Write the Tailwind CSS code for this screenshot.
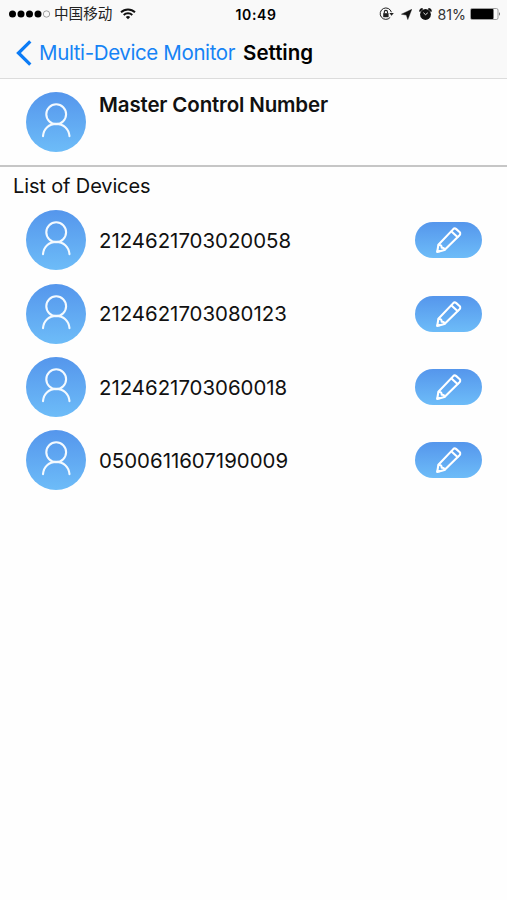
<!DOCTYPE html>
<html lang="en">

<head>
    <meta charset="UTF-8">
    <meta name="viewport" content="width=device-width, initial-scale=1.0">
    <title>Setting</title>
    <script src="https://cdn.jsdelivr.net/npm/@tailwindcss/browser@4"></script>
</head>

<body class="bg-[#fefefe] text-[#111] font-['Inter','Noto_Sans_CJK_SC',sans-serif] min-h-screen overflow-hidden">

    <!-- Shared icons -->
    <svg class="w-full h-0">
        <defs>
            <linearGradient id="blue" x1="0" y1="0" x2="0" y2="1">
                <stop offset="0" stop-color="#5596ec" />
                <stop offset="1" stop-color="#6dbcf8" />
            </linearGradient>
        </defs>
        <symbol id="user" viewBox="0 0 60 60">
            <g fill="none" stroke="#f4faff" stroke-width="2.1" stroke-linecap="round">
                <circle cx="30.2" cy="22.2" r="9.9" />
                <path d="M17 44.2C17.6 36.5 23 31.9 30.2 31.9S42.8 36.5 43.5 44.2" />
            </g>
        </symbol>
        <symbol id="pencil" viewBox="0 0 26 28">
            <g fill="none" stroke="#fff" stroke-width="2.1" stroke-linecap="round" stroke-linejoin="round">
                <path d="M1.7 25.4L2.9 18.3L17.8 2.6Q19.1 1.3 20.5 2.4L24.3 5.8Q25.4 7 24.3 8.4L9 23.4Z" />
                <path d="M16 4.9L22 10.6M3.2 18.5Q6.3 18 6.2 21.2Q8.8 21 9 23.4M1.9 24.8L4 24.6" />
            </g>
        </symbol>
    </svg>

    <header class="h-[79px] bg-[#f9f9f9] border-b border-[#dcdcdc]">
        <!-- Status bar -->
        <div class="h-[27px] grid grid-cols-[1fr_auto_1fr] items-center text-black">
            <div class="flex items-center pl-2">
                <svg class="w-[43px] h-2.5 shrink-0" viewBox="0 0 43 10">
                    <circle cx="4.5" cy="5" r="3.5" />
                    <circle cx="13" cy="5" r="3.5" />
                    <circle cx="21.5" cy="5" r="3.5" />
                    <circle cx="30" cy="5" r="3.5" />
                    <circle cx="38.5" cy="5" r="3.2" fill="none" stroke="#888" stroke-width=".8" />
                </svg>
                <span class="ml-[3px] pt-px text-[14.6px] leading-[27px] text-[#222] whitespace-nowrap">中国移动</span>
                <svg class="ml-2 w-4 h-3 shrink-0" viewBox="0 0 16 12" fill="none" stroke="#111" stroke-width="1.9">
                    <path d="M1 4.3A10 10 0 0 1 15 4.3M3.7 7A6.2 6.2 0 0 1 12.3 7" />
                    <path d="M8 11.2L5.8 9A3.2 3.2 0 0 1 10.2 9Z" fill="#111" stroke="none" />
                </svg>
            </div>
            <span class="pl-[5px] text-[14px] leading-[27px] font-semibold tracking-[.6px]">10:49</span>
            <div class="flex items-center justify-end pr-1.5">
                <svg class="w-[15px] h-[14px]" viewBox="0 0 15 14" fill="none" stroke="#222">
                    <path d="M11.2 10.4A5.7 5.7 0 1 1 12.4 5.2" stroke-width="1" />
                    <path d="M10.3 6H14.8L12.6 8.8Z" fill="#222" stroke="none" />
                    <rect x="4.2" y="6.2" width="5.4" height="4" fill="#222" stroke="none" />
                    <path d="M5.3 6.4V5A1.6 1.6 0 0 1 8.5 5V6.4" stroke-width="1.1" />
                </svg>
                <svg class="ml-[7px] w-[11px] h-[11px]" viewBox="0 0 11 11">
                    <path d="M10.8.3L6.8 10.6L5.3 6.1L.4 5.2Z" fill="#111" stroke="#111" stroke-width=".4" />
                </svg>
                <svg class="ml-[7px] w-[13px] h-3" viewBox="0 0 13 12">
                    <circle cx="6.5" cy="6.5" r="5.4" fill="#111" />
                    <path d="M1.3 3.6Q1.1 1.3 3.7 1.1M11.7 3.6Q11.9 1.3 9.3 1.1" fill="none" stroke="#111" stroke-width="2.2" />
                    <path d="M4.4 4.7L6.5 6.7L8.8 4.8" fill="none" stroke="#f9f9f9" stroke-width=".9" />
                </svg>
                <span class="ml-[6px] text-[14.2px] leading-[27px] text-[#333]">81%</span>
                <svg class="ml-1 w-[31px] h-3" viewBox="0 0 31 12">
                    <rect x=".5" y=".5" width="27.5" height="11" rx="1.6" fill="none" stroke="#888" stroke-width=".8" />
                    <rect x="1" y="1" width="22.5" height="10" rx=".8" fill="#000" />
                    <path d="M29.2 4Q30.8 6 29.2 8Z" fill="#333" />
                </svg>
            </div>
        </div>

        <!-- Navigation -->
        <nav class="h-[51px] flex items-center pl-4 text-[20.5px] leading-[51px] whitespace-nowrap">
            <svg class="w-4 h-[26px] shrink-0" viewBox="0 0 16 26" fill="none" stroke="#0c7cf6" stroke-width="3.3">
                <path d="M14.3 1.3L2.5 13L14.3 24.7" />
            </svg>
            <a class="ml-[7px] text-[#1683f5] tracking-[-.38px]">Multi-Device Monitor</a>
            <h1 class="ml-2 font-semibold text-black">Setting</h1>
        </nav>
    </header>

    <section class="h-[88px] flex pl-[26px] pt-[13px] border-b-2 border-[#c6c6c6]">
        <svg class="size-[60px]" viewBox="0 0 60 60">
            <circle cx="30" cy="30" r="30" fill="url(#blue)" />
            <use href="#user" />
        </svg>
        <h2 class="ml-[13px] text-[20.5px] leading-[25px] font-semibold tracking-[-.15px]">Master Control Number</h2>
    </section>

    <h3 class="h-[36.8px] pl-[13px] text-[20px] leading-[38px] tracking-[-.13px]">List of Devices</h3>

    <ul id="deviceList"></ul>

    <script>
        const devices = ['2124621703020058', '2124621703080123', '2124621703060018', '0500611607190009'];

        const deviceList = document.getElementById('deviceList');

        devices.forEach((device) => {
            const row = document.createElement('li');
            row.className = 'h-[73.3px] flex items-center pl-[26px] pr-[25px]';

            row.innerHTML = `
                <svg class="size-[60px] shrink-0" viewBox="0 0 60 60">
                    <circle cx="30" cy="30" r="30" fill="url(#blue)" />
                    <use href="#user" />
                </svg>
                <span class="ml-[13px] pt-0.5 text-[20.4px]">${device}</span>
                <button class="ml-auto w-[67px] h-9">
                    <svg class="w-[67px] h-9" viewBox="0 0 67 36">
                        <rect width="67" height="36" rx="18" fill="url(#blue)" />
                        <use href="#pencil" x="20.5" y="4.5" width="26" height="28" />
                    </svg>
                </button>
            `;

            deviceList.appendChild(row);
        });
    </script>
</body>

</html>
